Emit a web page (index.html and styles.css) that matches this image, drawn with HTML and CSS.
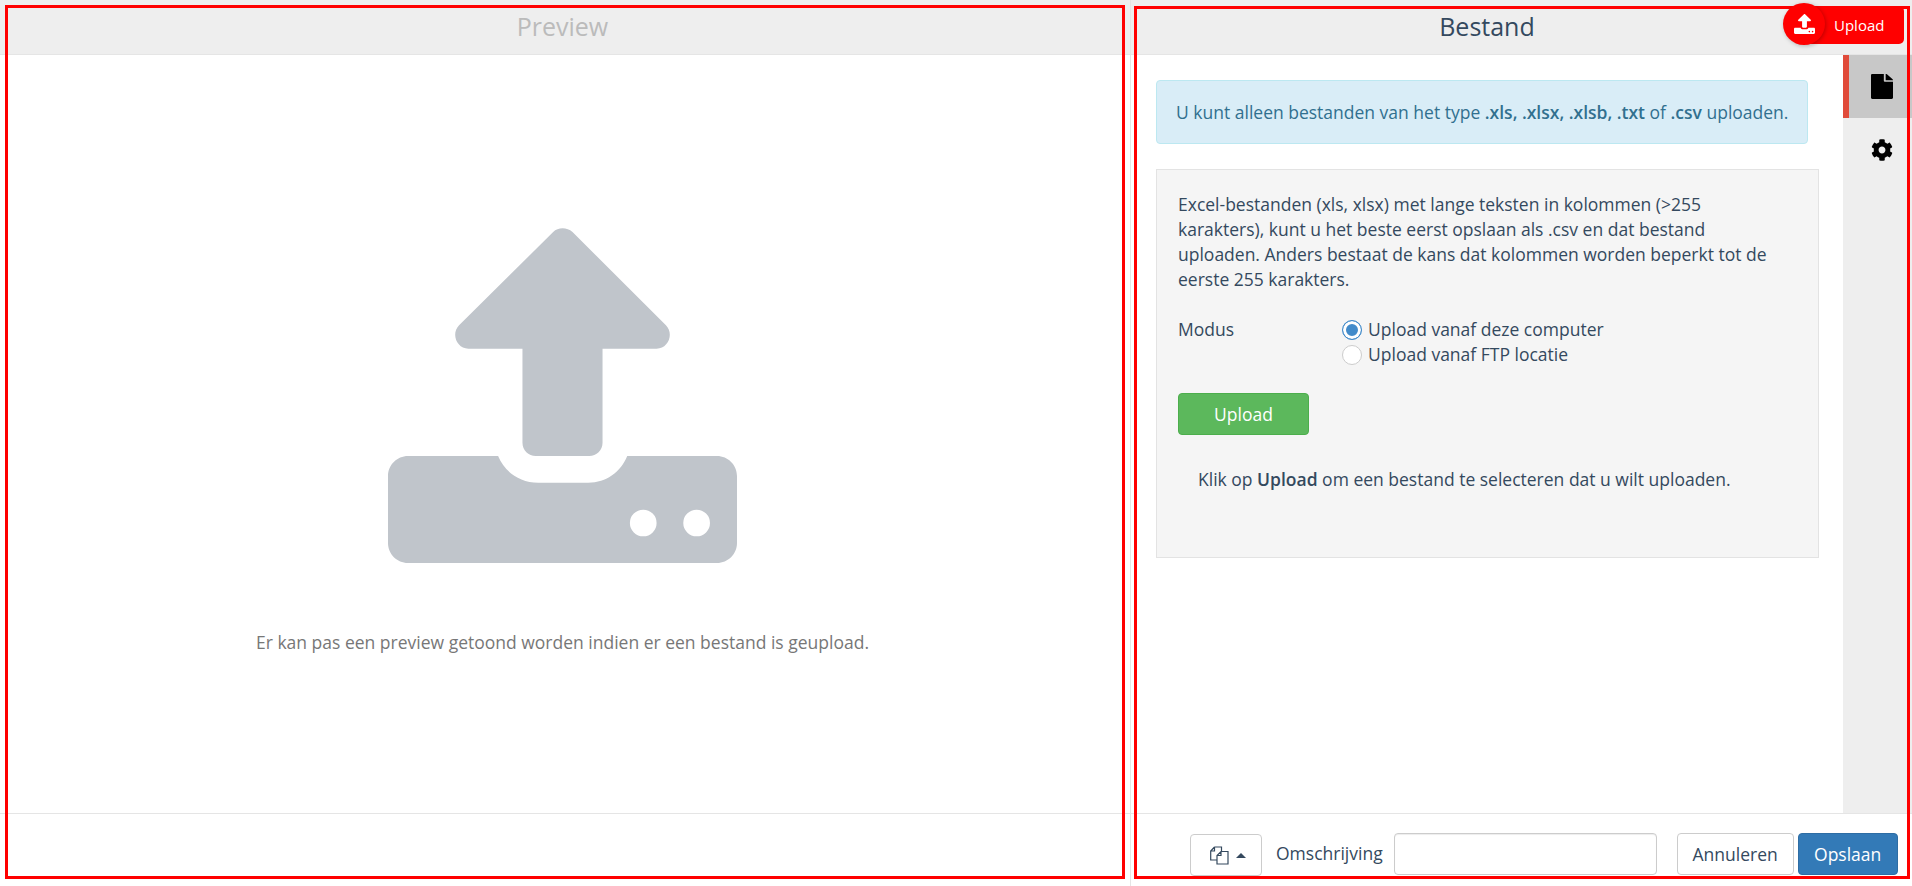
FILE: index.html
```html
<!DOCTYPE html>
<html lang="en">
<head>
  <meta charset="UTF-8" />
  <title>Bestand uploaden</title>
  <link rel="stylesheet" href="styles.css">
</head>
<body>
  <svg class="defs" width="0" height="0">
    <symbol id="upload-icon" viewBox="0 0 1046 1008" preserveAspectRatio="none">
      <path d="M495 15C510 0 536 0 553 15L833 295C858 320 840 365 805 365H643V647C643 669 625 687 603 687H443C421 687 403 669 403 647V365H241C206 365 188 320 213 295Z"/>
      <path fill-rule="evenodd" d="M60 687H330C350 735 395 767 450 767H600C655 767 697 735 717 687H986C1019 687 1046 714 1046 747V948C1046 981 1019 1008 986 1008H60C27 1008 0 981 0 948V747C0 714 27 687 60 687ZM765 848A40 40 0 1 0 765 928A40 40 0 1 0 765 848ZM925 848A40 40 0 1 0 925 928A40 40 0 1 0 925 848Z"/>
    </symbol>
  </svg>

  <div class="layout">
    <section class="panel panel-preview">
      <div class="panel-head"><h2 class="muted">Preview</h2></div>
      <div class="panel-body preview-body">
        <svg class="big-upload"><use href="#upload-icon"/></svg>
        <p class="preview-text">Er kan pas een preview getoond worden indien er een bestand is geupload.</p>
      </div>
      <div class="panel-foot"></div>
      <div class="outline"></div>
    </section>

    <section class="panel panel-file">
      <div class="panel-head head-file"><h2>Bestand</h2></div>
      <div class="panel-body file-body">
        <div class="file-content">
          <div class="alert">U kunt alleen bestanden van het type <b>.xls, .xlsx, .xlsb, .txt</b> of <b>.csv</b> uploaden.</div>
          <div class="well">
            <p class="well-text">Excel-bestanden (xls, xlsx) met lange teksten in kolommen (&gt;255 karakters), kunt u het beste eerst opslaan als .csv en dat bestand uploaden. Anders bestaat de kans dat kolommen worden beperkt tot de eerste 255 karakters.</p>
            <div class="mode-row">
              <span class="mode-label">Modus</span>
              <div class="mode-options">
                <label class="radio"><span class="radio-dot on"></span>Upload vanaf deze computer</label>
                <label class="radio"><span class="radio-dot"></span>Upload vanaf FTP locatie</label>
              </div>
            </div>
            <button class="btn btn-green">Upload</button>
            <p class="hint">Klik op <b>Upload</b> om een bestand te selecteren dat u wilt uploaden.</p>
          </div>
        </div>
        <nav class="side-tabs">
          <div class="tab active">
            <svg class="file-icon" viewBox="0 0 384 512" preserveAspectRatio="none"><path d="M224 136V0H24C10.7 0 0 10.7 0 24v464c0 13.3 10.7 24 24 24h336c13.3 0 24-10.7 24-24V160H248c-13.2 0-24-10.8-24-24zm160-14.1v6.1H256V0h6.1c6.4 0 12.5 2.5 17 7l97.9 98c4.5 4.5 7 10.6 7 16.9z"/></svg>
          </div>
          <div class="tab">
            <svg class="gear-icon" viewBox="0 0 512 512"><path d="M487.4 315.7l-42.6-24.6c4.3-23.2 4.3-47 0-70.2l42.6-24.6c4.9-2.8 7.1-8.6 5.5-14-11.1-35.6-30-67.8-54.7-94.6-3.8-4.1-10-5.1-14.8-2.3L380.8 110c-17.9-15.4-38.5-27.3-60.8-35.1V25.8c0-5.6-3.9-10.5-9.4-11.7-36.7-8.2-74.3-7.8-109.2 0-5.5 1.2-9.4 6.1-9.4 11.7V75c-22.2 7.9-42.8 19.8-60.8 35.1L88.7 85.5c-4.9-2.8-11-1.9-14.8 2.3-24.7 26.7-43.6 58.9-54.7 94.6-1.7 5.4.6 11.2 5.5 14L67.3 221c-4.3 23.2-4.3 47 0 70.2l-42.6 24.6c-4.9 2.8-7.1 8.6-5.5 14 11.1 35.6 30 67.8 54.7 94.6 3.8 4.1 10 5.1 14.8 2.3l42.6-24.6c17.9 15.4 38.5 27.3 60.8 35.1v49.2c0 5.6 3.9 10.5 9.4 11.7 36.7 8.2 74.3 7.8 109.2 0 5.5-1.2 9.4-6.1 9.4-11.7v-49.2c22.2-7.9 42.8-19.8 60.8-35.1l42.6 24.6c4.9 2.8 11 1.9 14.8-2.3 24.7-26.7 43.6-58.9 54.7-94.6 1.5-5.5-.7-11.3-5.6-14.1zM256 336c-44.1 0-80-35.9-80-80s35.9-80 80-80 80 35.9 80 80-35.9 80-80 80z"/></svg>
          </div>
        </nav>
      </div>
      <div class="panel-foot foot-file">
        <button class="btn btn-default btn-copy">
          <svg class="copy-icon" viewBox="0 0 19 19"><path d="M4.5 1H11.5V5M4.5 1L.7 5V14H6.5M.7 5H4.5V1M11 5.5H18V18H7V9.5ZM11 5.5V9.5H7"/></svg>
          <span class="caret"></span>
        </button>
        <label class="desc-label">Omschrijving</label>
        <input class="desc-input" type="text" />
        <button class="btn btn-default btn-cancel">Annuleren</button>
        <button class="btn btn-blue">Opslaan</button>
      </div>
      <div class="outline"></div>
      <div class="upload-badge">
        <span class="badge-circle"><svg class="badge-icon"><use href="#upload-icon"/></svg></span>
        <span class="badge-text">Upload</span>
      </div>
    </section>
  </div>
</body>
</html>
```

FILE: styles.css
```css
* {
  box-sizing: border-box;
}
html, body {
  height: 100%;
}
body {
  margin: 0;
  font-family: "Open Sans", sans-serif;
  font-size: 17.5px;
  line-height: 25px;
  color: #34495e;
  background: #fff;
  overflow: hidden;
}
b {
  font-weight: 600;
}
.defs {
  position: absolute;
}
.layout {
  display: flex;
  height: 886px;
}
.panel {
  position: relative;
  display: flex;
  flex-direction: column;
}
.panel-preview {
  width: 1131px;
  border-right: 1px solid #e5e5e5;
}
.panel-file {
  flex: 1;
}
.outline {
  position: absolute;
  border: 3px solid #f00;
  pointer-events: none;
}
.panel-preview .outline {
  left: 5px;
  top: 5px;
  width: 1120px;
  height: 874px;
}
.panel-file .outline {
  left: 3px;
  top: 6px;
  width: 776px;
  height: 873px;
}
.panel-head {
  height: 55px;
  flex: none;
  background: #eee;
  border-bottom: 1px solid #e5e5e5;
  text-align: center;
}
.panel-preview .panel-head {
  padding-right: 5px;
}
.head-file {
  padding-right: 69px;
}
h2 {
  margin: 0;
  padding-top: 7px;
  font-size: 25px;
  line-height: 38px;
  font-weight: 400;
}
h2.muted {
  color: #bbb;
}
.panel-body {
  flex: 1;
}
.panel-foot {
  height: 73px;
  flex: none;
  border-top: 1px solid #e5e5e5;
}

/* preview */
.preview-body {
  display: flex;
  flex-direction: column;
  align-items: center;
  padding: 172px 5px 0 0;
}
.big-upload {
  width: 349px;
  height: 336px;
  fill: #c0c5cb;
}
.preview-text {
  margin: 67px 0 0;
  color: #777;
}

/* file */
.file-body {
  display: flex;
}
.file-content {
  flex: 1;
  padding: 25px 24px 0 25px;
}
.alert {
  width: 652px;
  height: 64px;
  padding: 19px 19px;
  background: #d9edf7;
  border: 1px solid #bce8f1;
  border-radius: 4px;
  color: #31708f;
  white-space: nowrap;
}
.well {
  margin-top: 25px;
  height: 389px;
  padding: 22px 42px 21px 21px;
  background: #f5f5f5;
  border: 1px solid #e3e3e3;
}
.well-text {
  margin: 0;
}
.mode-row {
  display: flex;
  margin-top: 25px;
}
.mode-label {
  width: 164px;
}
.radio {
  display: flex;
  align-items: center;
}
.radio-dot {
  width: 20px;
  height: 20px;
  margin-right: 6px;
  border-radius: 50%;
  border: 1px solid #ccc;
  background: #fff;
}
.radio-dot.on {
  border-color: #428bca;
  box-shadow: inset 0 0 0 3px #fff;
  background: #428bca;
}
.btn {
  height: 42px;
  border: 1px solid #ccc;
  border-radius: 4px;
  font-family: inherit;
  font-size: 17.5px;
  padding: 0;
  cursor: pointer;
}
.btn-green {
  display: block;
  width: 131px;
  margin-top: 26px;
  background: #5cb85c;
  border-color: #4cae4c;
  color: #fff;
}
.hint {
  margin: 32px 0 0 20px;
}
.side-tabs {
  width: 69px;
  flex: none;
  background: #eee;
}
.tab {
  height: 63px;
  display: flex;
  align-items: center;
  padding-left: 28px;
}
.tab.active {
  background: #c8c8c8;
  border-left: 6px solid #e04b3a;
  padding-left: 22px;
}
.file-icon {
  width: 22px;
  height: 25px;
}
.gear-icon {
  width: 22px;
  height: 22px;
}

/* footer */
.foot-file {
  display: flex;
  align-items: flex-start;
  padding: 19px 0 0 59px;
}
.btn-default {
  background: #fff;
  color: #34495e;
}
.btn-copy {
  width: 72px;
  margin-top: 1px;
  padding-left: 19px;
  display: flex;
  align-items: center;
  gap: 7px;
}
.copy-icon {
  width: 19px;
  height: 19px;
  fill: none;
  stroke: #34495e;
  stroke-width: 1.2;
}
.caret {
  border-left: 5px solid transparent;
  border-right: 5px solid transparent;
  border-bottom: 5px solid #34495e;
}
.desc-label {
  margin: 8px 11px 0 14px;
}
.desc-input {
  width: 263px;
  height: 42px;
  border: 1px solid #ccc;
  border-radius: 4px;
  box-shadow: inset 0 1px 1px rgba(0,0,0,.075);
}
.btn-cancel {
  width: 117px;
  margin-left: 20px;
}
.btn-blue {
  width: 100px;
  margin-left: 4px;
  background: #337ab7;
  border-color: #2e6da4;
  color: #fff;
}

/* floating upload button */
.upload-badge {
  position: absolute;
  left: 652px;
  top: 3px;
  display: flex;
  align-items: flex-start;
  width: 121px;
}
.badge-circle {
  position: relative;
  flex: none;
  width: 42px;
  height: 42px;
  border-radius: 50%;
  background: #f00;
  display: flex;
  align-items: center;
  justify-content: center;
  box-shadow: 1px 1px 4px rgba(0,0,0,.25);
}
.badge-icon {
  width: 21px;
  height: 20px;
  fill: #fff;
}
.badge-text {
  margin: 3px 0 0 -21px;
  flex: none;
  width: 100px;
  height: 38px;
  padding-left: 30px;
  background: #f00;
  border-radius: 0 5px 5px 0;
  color: #fff;
  font-size: 15px;
  line-height: 38px;
}
```
